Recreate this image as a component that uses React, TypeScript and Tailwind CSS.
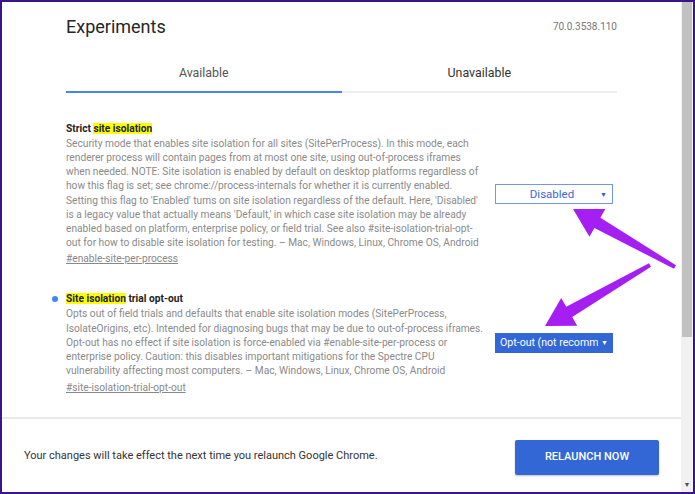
import React from "react";

const desc1 = [
  "Security mode that enables site isolation for all sites (SitePerProcess). In this mode, each",
  "renderer process will contain pages from at most one site, using out-of-process iframes",
  "when needed. NOTE: Site isolation is enabled by default on desktop platforms regardless of",
  "how this flag is set; see chrome://process-internals for whether it is currently enabled.",
  "Setting this flag to 'Enabled' turns on site isolation regardless of the default. Here, 'Disabled'",
  "is a legacy value that actually means 'Default,' in which case site isolation may be already",
  "enabled based on platform, enterprise policy, or field trial. See also #site-isolation-trial-opt-",
  "out for how to disable site isolation for testing. – Mac, Windows, Linux, Chrome OS, Android",
];

const desc2 = [
  "Opts out of field trials and defaults that enable site isolation modes (SitePerProcess,",
  "IsolateOrigins, etc). Intended for diagnosing bugs that may be due to out-of-process iframes.",
  "Opt-out has no effect if site isolation is force-enabled via #enable-site-per-process or",
  "enterprise policy. Caution: this disables important mitigations for the Spectre CPU",
  "vulnerability affecting most computers. – Mac, Windows, Linux, Chrome OS, Android",
];

function Desc({ lines }: { lines: string[] }) {
  return (
    <div className="text-[10.2px] leading-[14.15px] text-[#8a8a8a] whitespace-nowrap">
      {lines.map((l, i) => (
        <div key={i}>{l}</div>
      ))}
    </div>
  );
}

export default function App() {
  return (
    <div className="relative w-[695px] h-[494px] border-2 border-[#3a1488] bg-white flex overflow-hidden font-['Roboto',sans-serif]">
      <div className="flex-1 flex flex-col">
        <div className="flex-1 flex flex-col">
          <div className="w-[551px] mx-auto flex flex-col">
            <div className="mt-[12px] h-[24px] flex items-center justify-between">
              <div className="text-[18px] text-[#262626]">Experiments</div>
              <div className="text-[10px] text-[#777]">70.0.3538.110</div>
            </div>
            <div className="mt-[16px] flex">
              <div className="flex-1 h-[39px] pt-[2px] flex items-center justify-center border-b-2 border-[#4a83ea] text-[12.4px] text-[#555]">
                Available
              </div>
              <div className="flex-1 h-[39px] pt-[2px] flex items-center justify-center border-b-2 border-[#eeeeee] text-[12.4px] text-[#333]">
                Unavailable
              </div>
            </div>

            <div className="mt-[28px] flex items-center justify-between">
              <div className="w-[420px]">
                <div className="text-[10.2px] leading-[16px] font-bold text-[#222]">
                  Strict <span className="bg-[#ffff00]">site isolation</span>
                </div>
                <Desc lines={desc1} />
                <div className="mt-[2px] text-[10.2px] leading-[14.15px] text-[#888] underline">
                  #enable-site-per-process
                </div>
              </div>
              <div className="mr-[4px] w-[118px] h-[20px] border border-[#7098e6] bg-white flex items-center relative">
                <div className="flex-1 text-center text-[11.5px] text-[#3d68d3] pr-[4px] pt-[1px]">Disabled</div>
                <div className="absolute right-[5px] top-[5px] text-[7px] text-[#2f5fcf]">▼</div>
              </div>
            </div>

            <div className="mt-[25px] flex items-center justify-between">
              <div className="w-[420px]">
                <div className="relative text-[10.2px] leading-[16px] font-bold text-[#222]">
                  <span className="absolute left-[-14px] top-[5px] w-[6px] h-[6px] rounded-full bg-[#4285f4]" />
                  <span className="bg-[#ffff00]">Site isolation</span> trial opt-out
                </div>
                <Desc lines={desc2} />
                <div className="mt-[3px] text-[10.2px] leading-[14.15px] text-[#888] underline">
                  #site-isolation-trial-opt-out
                </div>
              </div>
              <div className="mr-[4px] w-[118px] h-[20px] bg-[#3367d6] flex items-center relative overflow-hidden">
                <div className="pl-[5px] w-[103px] overflow-hidden whitespace-nowrap text-[10.6px] text-white">
                  Opt-out (not recommended)
                </div>
                <div className="absolute right-[5px] top-[5px] text-[7px] text-white">▼</div>
              </div>
            </div>
          </div>
        </div>

        <div className="h-[75px] border-t-2 border-[#e9e9e9] flex items-center justify-between pl-[22px] pr-[22px]">
          <div className="text-[11px] text-[#333] mt-[2px]">
            Your changes will take effect the next time you relaunch Google Chrome.
          </div>
          <div className="w-[144px] h-[35px] mt-[4px] bg-[#3367d6] rounded-[2px] shadow-[0_1px_2px_rgba(0,0,0,0.25)] flex items-center justify-center text-[11px] font-medium text-white">
            RELAUNCH NOW
          </div>
        </div>
      </div>

      <div className="w-[12px] flex flex-col bg-[#f1f1f1]">
        <div className="h-[335px] mx-[1px] bg-[#c1c1c1]" />
        <div className="flex-1" />
        <div className="h-[14px] flex items-center justify-center text-[7px] text-[#505050]">▼</div>
      </div>

      <svg
        className="absolute left-[-2px] top-[-2px] pointer-events-none"
        width="695"
        height="494"
        viewBox="0 0 695 494"
      >
        <polygon
          points="573,209 605.3,209 600.4,217.7 676,265.3 674,268.7 594.4,228.1 589.5,236.8"
          fill="#a51ef2"
        />
        <polygon
          points="545,326 561.2,298.1 566.2,306.7 649,263.3 651,266.7 572.2,317.1 577.2,325.7"
          fill="#a51ef2"
        />
      </svg>
    </div>
  );
}
